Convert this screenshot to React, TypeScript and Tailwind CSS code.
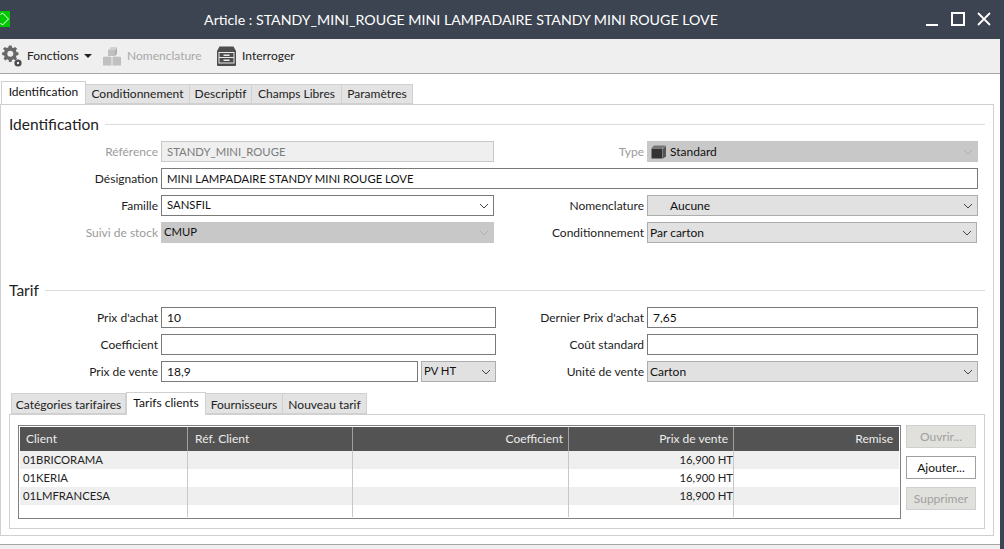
import React from "react";

function Chevron({ color = "#444" }: { color?: string }) {
  return (
    <svg width="10" height="6" viewBox="0 0 10 6" className="shrink-0">
      <path d="M1 1 L5 5 L9 1" fill="none" stroke={color} strokeWidth="1" />
    </svg>
  );
}

function Label({ children, disabled, w }: { children: React.ReactNode; disabled?: boolean; w: string }) {
  return (
    <div className={`${w} shrink-0 pr-[3px] text-right leading-[21px] ${disabled ? "text-[#9b9b9b]" : "text-[#1c1c1c]"}`}>
      {children}
    </div>
  );
}

function Input({ value, w, disabled, caps }: { value?: string; w: string; disabled?: boolean; caps?: boolean }) {
  return (
    <div
      className={`${w} h-[21px] shrink-0 border pl-[5px] leading-[19px] ${caps ? "text-[11.300px]" : ""} ${
        disabled ? "border-[#c8c8c8] bg-[#efefef] text-[#7b7b7b]" : "border-[#7a7a7a] bg-white text-[#111]"
      }`}
    >
      {value}
    </div>
  );
}

function Select({
  value,
  w,
  variant = "plain",
  pad = "pl-[2px]",
  icon,
  caps,
}: {
  value: string;
  w: string;
  variant?: "plain" | "gray" | "disabled";
  pad?: string;
  icon?: React.ReactNode;
  caps?: boolean;
}) {
  const cls =
    variant === "plain"
      ? "border-[#7a7a7a] bg-white"
      : variant === "gray"
        ? "border-[#adadad] bg-[#e1e1e1]"
        : "border-[#c8c8c8] bg-[#c8c8c8]";
  return (
    <div className={`${w} ${cls} ${pad} flex h-[21px] shrink-0 items-center justify-between border pr-[4px] text-[#111]`}>
      <span className={`flex items-center ${caps ? "text-[11.300px]" : ""}`}>
        {icon}
        {value}
      </span>
      <Chevron color={variant === "disabled" ? "#b0b0b0" : "#444"} />
    </div>
  );
}

function Section({ title }: { title: string }) {
  return (
    <div className="flex items-center gap-[6px] pl-[8px] pr-[8px]">
      <span className="text-[15.500px] leading-[20px] text-[#222]">{title}</span>
      <div className="h-px flex-1 bg-[#dcdcdc]" />
    </div>
  );
}

function Tab({ label, active, w }: { label: string; active?: boolean; w: string }) {
  return active ? (
    <div className={`${w} relative z-10 -mb-px h-[23px] border border-b-0 border-[#d0d0d0] bg-white text-center leading-[19px] text-[#111]`}>
      {label}
    </div>
  ) : (
    <div className={`${w} mt-[3px] h-[20px] border border-l-0 border-[#d0d0d0] bg-[#e3e3e3] text-center leading-[18px] text-[#222]`}>
      {label}
    </div>
  );
}

function Row({ children }: { children: React.ReactNode }) {
  return <div className="mt-[6px] flex">{children}</div>;
}

function Gear() {
  return (
    <svg width="20" height="22" viewBox="0 0 20 22">
      <g transform="translate(0 -1)">
        <path
          fill="#686868"
          d="M7 1.500h2.600l.4 2 1.500.6 1.700-1.200 1.900 1.900-1.200 1.700.6 1.500 2 .4v2.600l-2 .4-.6 1.500 1.200 1.700-1.900 1.900-1.700-1.200-1.500.6-.4 2H7l-.4-2-1.500-.6-1.700 1.200-1.900-1.900 1.200-1.700-.6-1.500-2-.4V8.400l2-.4.6-1.500L1 4.800l1.900-1.900 1.700 1.200 1.500-.6z"
        />
        <circle cx="8.300" cy="9.700" r="3" fill="#efefef" />
      </g>
      <circle cx="16" cy="18" r="3.600" fill="#4a4a4a" />
      <circle cx="16" cy="18" r="1.200" fill="#efefef" />
    </svg>
  );
}

function Cubes() {
  return (
    <svg width="20" height="20" viewBox="0 0 20 20">
      <path d="M6 4 L9 1 H15 L13 4 Z" fill="#d2d2d2" />
      <rect x="6" y="4" width="7" height="6" fill="#c0c0c0" />
      <path d="M13 4 L15 1.500 V8 L13 10 Z" fill="#b0b0b0" />
      <rect x="1" y="11" width="8.500" height="8.500" fill="#c0c0c0" />
      <rect x="10.500" y="11" width="8.500" height="8.500" fill="#c0c0c0" />
      <path d="M2 10.500 H8 L9 11 H1 Z M11 10.500 H17 L19 11 H10 Z" fill="#d2d2d2" />
    </svg>
  );
}

function Cabinet() {
  return (
    <svg width="21" height="20" viewBox="0 0 21 20">
      <path d="M3.500 0.500 H17.500 L20 5 V19 a1 1 0 0 1-1 1 H2 a1 1 0 0 1-1-1 V5 Z" fill="#4d4d4d" />
      <rect x="2.500" y="6" width="16" height="11.500" fill="#e9e9e9" />
      <rect x="3.500" y="7" width="14" height="4" fill="#4d4d4d" />
      <rect x="3.500" y="12" width="14" height="4.500" fill="#4d4d4d" />
      <rect x="7.500" y="8.500" width="6" height="1.500" fill="#e9e9e9" />
      <rect x="7.500" y="13.500" width="6" height="1.500" fill="#e9e9e9" />
    </svg>
  );
}

function Cube() {
  return (
    <svg width="16" height="14" viewBox="0 0 16 14" className="mr-[3px]">
      <path d="M3 0.500 H15 L12 3 H0.500 Z" fill="#777" />
      <rect x="0.500" y="3.500" width="11" height="10" fill="#333" />
      <path d="M12 3.500 L15 1 V11.500 L12 13.500 Z" fill="#555" />
    </svg>
  );
}

const rows = [
  ["01BRICORAMA", "16,900 HT", true],
  ["01KERIA", "16,900 HT", false],
  ["01LMFRANCESA", "18,900 HT", true],
] as const;

export default function App() {
  return (
    <div
      className="flex h-[549px] w-[1004px] flex-col overflow-hidden bg-[#3d4451] text-[12px]"
      style={{ fontFamily: 'Lato, "Open Sans", sans-serif' }}
    >
      {/* title bar */}
      <div className="relative flex h-[39px] shrink-0 items-center justify-center text-white">
        <div className="absolute left-0 top-[11px] h-[16px] w-[10px] overflow-hidden bg-[#00c800]">
          <svg width="10" height="16" viewBox="0 0 10 16">
            <path d="M0.500 3.500 L2.500 2 L8.500 8 L2.500 14 L0.500 12" fill="none" stroke="#fff" strokeWidth="1" />
          </svg>
        </div>
        <span className="pr-[82px] text-[14.200px] leading-[20px]">
          Article : STANDY_MINI_ROUGE MINI LAMPADAIRE STANDY MINI ROUGE LOVE
        </span>
        <div className="absolute right-0 top-0 flex h-[39px] items-start">
          <svg width="70" height="39" viewBox="0 0 70 39" className="mr-[11px]">
            <rect x="3" y="24" width="12" height="2" fill="#fff" />
            <rect x="29" y="13" width="12" height="12" fill="none" stroke="#fff" strokeWidth="2" />
            <path d="M55 13 L67 25 M67 13 L55 25" stroke="#fff" strokeWidth="1.800" />
          </svg>
        </div>
      </div>

      <div className="mr-[4px] flex min-h-0 flex-1 flex-col bg-white">
        {/* toolbar */}
        <div className="flex h-[35px] shrink-0 items-center border-b border-[#a5a5a5] bg-[#efefef] text-[#222]">
          <div className="ml-[2px] flex w-[100px] items-center">
            <Gear />
            <span className="ml-[5px]">Fonctions</span>
            <svg width="8" height="4" viewBox="0 0 8 4" className="ml-[5px]">
              <path d="M0 0 H8 L4 4 Z" fill="#222" />
            </svg>
          </div>
          <div className="flex w-[114px] items-center">
            <Cubes />
            <span className="ml-[5px] text-[#a8a8a8]">Nomenclature</span>
          </div>
          <div className="flex items-center">
            <Cabinet />
            <span className="ml-[5px]">Interroger</span>
          </div>
        </div>

        {/* tabs */}
        <div className="mt-[7px] flex h-[23px] shrink-0 pl-px">
          <Tab label="Identification" active w="w-[85px]" />
          <Tab label="Conditionnement" w="w-[104px]" />
          <Tab label="Descriptif" w="w-[62px]" />
          <Tab label="Champs Libres" w="w-[90px]" />
          <Tab label="Paramètres" w="w-[71px]" />
        </div>

        {/* panel */}
        <div className="flex w-[994px] flex-col border border-[#d0d0d0] pt-[9px]">
          <Section title="Identification" />
          <div className="mt-[7px] flex">
            <Label w="w-[160px]" disabled>Référence</Label>
            <Input w="w-[333px]" value="STANDY_MINI_ROUGE" disabled caps />
            <Label w="w-[153px]" disabled>Type</Label>
            <Select w="w-[331px]" value="Standard" variant="disabled" icon={<Cube />} pad="pl-[3px]" />
          </div>
          <Row>
            <Label w="w-[160px]">Désignation</Label>
            <Input w="w-[817px]" value="MINI LAMPADAIRE STANDY MINI ROUGE LOVE" caps />
          </Row>
          <Row>
            <Label w="w-[160px]">Famille</Label>
            <Select w="w-[333px]" value="SANSFIL" pad="pl-[5px]" caps />
            <Label w="w-[153px]">Nomenclature</Label>
            <Select w="w-[331px]" value="Aucune" variant="gray" pad="pl-[22px]" />
          </Row>
          <Row>
            <Label w="w-[160px]" disabled>Suivi de stock</Label>
            <Select w="w-[333px]" value="CMUP" variant="disabled" caps />
            <Label w="w-[153px]">Conditionnement</Label>
            <Select w="w-[330px]" value="Par carton" variant="gray" />
          </Row>

          <div className="mt-[37px]">
            <Section title="Tarif" />
          </div>
          <div className="mt-[7px] flex">
            <Label w="w-[160px]">Prix d'achat</Label>
            <Input w="w-[335px]" value="10" />
            <Label w="w-[151px]">Dernier Prix d'achat</Label>
            <Input w="w-[331px]" value="7,65" />
          </div>
          <Row>
            <Label w="w-[160px]">Coefficient</Label>
            <Input w="w-[335px]" />
            <Label w="w-[151px]">Coût standard</Label>
            <Input w="w-[331px]" />
          </Row>
          <Row>
            <Label w="w-[160px]">Prix de vente</Label>
            <Input w="w-[257px]" value="18,9" />
            <div className="ml-[3px]">
              <Select w="w-[75px]" value="PV HT" variant="gray" caps />
            </div>
            <Label w="w-[151px]">Unité de vente</Label>
            <Select w="w-[331px]" value="Carton" variant="gray" />
          </Row>

          {/* sub tabs */}
          <div className="mt-[10px] flex h-[22px] pl-[10px]">
            <div className="mt-[1px] h-[21px] w-[115px] border border-[#d0d0d0] bg-[#e3e3e3] text-center leading-[22px] text-[#222]">
              Catégories tarifaires
            </div>
            <div className="relative z-10 h-[23px] w-[80px] border border-b-0 border-[#d0d0d0] bg-white text-center leading-[20px] text-[#111]">
              Tarifs clients
            </div>
            <div className="mt-[1px] h-[21px] w-[77px] border border-l-0 border-[#d0d0d0] bg-[#e3e3e3] text-center leading-[22px] text-[#222]">
              Fournisseurs
            </div>
            <div className="mt-[1px] h-[21px] w-[84px] border border-l-0 border-[#d0d0d0] bg-[#e3e3e3] text-center leading-[22px] text-[#222]">
              Nouveau tarif
            </div>
          </div>
          <div className="mx-[8px] flex h-[115px] w-[976px] gap-[5px] border border-[#d0d0d0] pl-[8px] pt-[10px]">
            <div className="h-[94px] w-[883px] shrink-0 border border-[#808080] p-px">
              <div className="flex h-[24px] bg-[#535353] text-[#ececec]">
                <div className="w-[168px] border-r border-[#a0a0a0] pl-[6px] leading-[24px]">Client</div>
                <div className="w-[165px] border-r border-[#a0a0a0] pl-[7px] leading-[24px]">Réf. Client</div>
                <div className="w-[216px] border-r border-[#a0a0a0] pr-[5px] text-right leading-[24px]">Coefficient</div>
                <div className="w-[165px] border-r border-[#a0a0a0] pr-[5px] text-right leading-[24px]">Prix de vente</div>
                <div className="w-[165px] pr-[6px] text-right leading-[24px]">Remise</div>
              </div>
              {rows.map(([c, p, odd]) => (
                <div key={c} className={`flex h-[18px] text-[11.300px] leading-[18px] text-[#222] ${odd ? "bg-[#efefef]" : "bg-white"}`}>
                  <div className="w-[168px] border-r border-[#c8c8c8] pl-[3px]">{c}</div>
                  <div className="w-[165px] border-r border-[#c8c8c8]" />
                  <div className="w-[216px] border-r border-[#c8c8c8]" />
                  <div className="w-[165px] border-r border-[#c8c8c8] text-right">{p}</div>
                  <div className="w-[165px]" />
                </div>
              ))}
              <div className="flex h-[12px]">
                <div className="w-[168px] border-r border-[#c8c8c8]" />
                <div className="w-[165px] border-r border-[#c8c8c8]" />
                <div className="w-[216px] border-r border-[#c8c8c8]" />
                <div className="w-[165px] border-r border-[#c8c8c8]" />
              </div>
            </div>
            <div className="flex w-[70px] shrink-0 flex-col gap-[8px]">
              <div className="h-[23px] border border-[#cfcfcf] bg-[#e0e0dc] text-center leading-[21px] text-[#a0a0a0]">Ouvrir...</div>
              <div className="h-[23px] border border-[#a0a0a0] bg-white text-center leading-[21px] text-[#111]">Ajouter...</div>
              <div className="h-[23px] border border-[#cfcfcf] bg-[#e0e0dc] text-center leading-[21px] text-[#a0a0a0]">Supprimer</div>
            </div>
          </div>
          <div className="h-[6px]" />
        </div>

        {/* footer */}
        <div className="mt-[8px] flex-1 border-t border-[#a5a5a5] bg-[#efefef]" />
      </div>
    </div>
  );
}
